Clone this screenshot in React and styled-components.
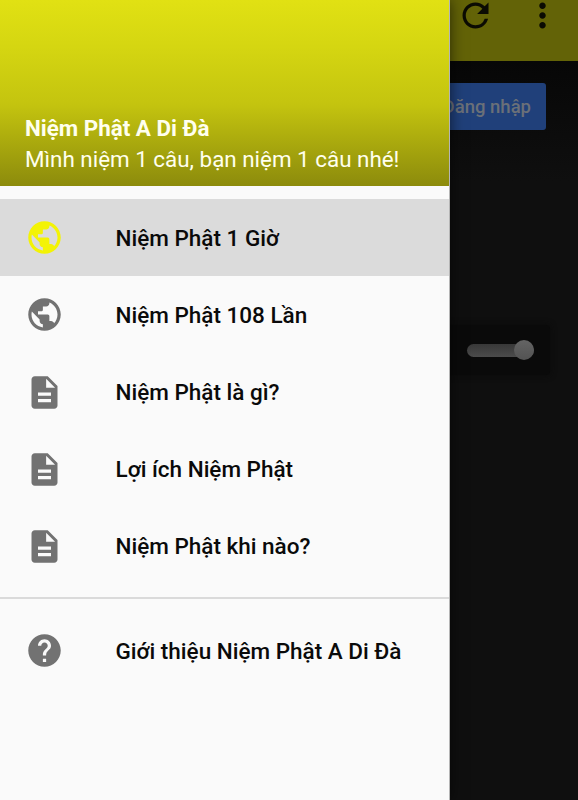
import React from "react"
import styled, { createGlobalStyle } from "styled-components"
import { MdPublic, MdDescription, MdHelp, MdRefresh, MdMoreVert } from "react-icons/md"

const GlobalStyle = createGlobalStyle`
    * {
        box-sizing: border-box;
    }
    body {
        margin: 0;
        font-family: Roboto, "Noto Sans", sans-serif;
    }
`;

const Screen = styled.div`
    position: relative;
    height: 800px;
    overflow: hidden;
    background: #0f0f0f;
`;

/* the page behind the open drawer, already dimmed */
const AppBar = styled.header`
    display: flex;
    justify-content: flex-end;
    gap: 28.5px;
    height: 61px;
    padding: 0 16px 0 0;
    background: #636307;
    color: #0b0b03;
    font-size: 39px;

    svg {
        margin-top: -4px;
    }
`;

const Page = styled.main`
    display: flex;
    flex-direction: column;
    align-items: flex-end;
    height: 739px;
    padding: 22px 28px 0 0;
    background: linear-gradient(#070707, #0f0f0f 120px);
`;

const LoginButton = styled.button`
    width: 180px;
    height: 47px;
    margin-right: 4px;
    padding: 0 15px 0 0;
    border: 0;
    border-radius: 3px;
    background: #20407a;
    color: #6b7078;
    font-family: Roboto, sans-serif;
    font-size: 18.5px;
    font-weight: 500;
    text-align: right;
`;

const Player = styled.div`
    display: flex;
    align-items: center;
    justify-content: flex-end;
    width: 300px;
    height: 50px;
    margin-top: 195px;
    padding-right: 16px;
    border-radius: 4px;
    background: #0a0a0a;
    box-shadow: 0 0 6px #0a0a0a;
`;

const Track = styled.div`
    display: flex;
    align-items: center;
    justify-content: flex-end;
    width: 67px;
    height: 13px;
    border-radius: 7px;
    background: linear-gradient(#383838, #4b4b4b);
`;

const Thumb = styled.div`
    width: 20px;
    height: 20px;
    border-radius: 50%;
    background: linear-gradient(#646464, #535353);
`;

const Drawer = styled.aside`
    position: absolute;
    top: 0;
    left: 0;
    width: 450px;
    height: 800px;
    background: #fafafa;
    border-right: 1px solid #b5b5b5;
    box-shadow: 0 0 14px rgba(0, 0, 0, 0.6);
`;

const Header = styled.div`
    display: flex;
    flex-direction: column;
    justify-content: flex-end;
    height: 186px;
    padding: 0 25px 12px;
    background: linear-gradient(#e1e113 0%, #d5d611 25%, #c4c40f 56%, #8c8b0c 100%);
    color: #ffffee;
    font-size: 22.4px;
    line-height: 30px;
    white-space: nowrap;
`;

const Title = styled.div`
    margin-bottom: 1px;
    font-weight: 700;
`;

const Menu = styled.nav`
    padding-top: 12.6px;
`;

const Item = styled.a`
    display: flex;
    align-items: center;
    height: 77.2px;
    padding: 1px 0 0 25px;
    background: ${props => props.$active ? "#dbdbdb" : "transparent"};
    color: #0a0a0a;
    font-size: 22.5px;
    font-weight: 500;
    white-space: nowrap;

    svg {
        width: 39px;
        height: 39px;
        margin-right: 51.5px;
        color: ${props => props.$active ? "#f3f305" : "#727272"};
    }
`;

const Divider = styled.hr`
    height: 1.6px;
    margin: 12.4px 0 13px;
    border: 0;
    background: #dadada;
`;

const items = [
    { label: "Niệm Phật 1 Giờ", icon: MdPublic, active: true },
    { label: "Niệm Phật 108 Lần", icon: MdPublic },
    { label: "Niệm Phật là gì?", icon: MdDescription },
    { label: "Lợi ích Niệm Phật", icon: MdDescription },
    { label: "Niệm Phật khi nào?", icon: MdDescription },
]

const App = () => (
    <Screen>
        <GlobalStyle />
        <AppBar>
            <MdRefresh />
            <MdMoreVert />
        </AppBar>
        <Page>
            <LoginButton>Đăng nhập</LoginButton>
            <Player>
                <Track><Thumb /></Track>
            </Player>
        </Page>
        <Drawer>
            <Header>
                <Title>Niệm Phật A Di Đà</Title>
                <div>Mình niệm 1 câu, bạn niệm 1 câu nhé!</div>
            </Header>
            <Menu>
                {items.map(({ label, icon: Icon, active }) => (
                    <Item key={label} $active={active}><Icon />{label}</Item>
                ))}
                <Divider />
                <Item><MdHelp />Giới thiệu Niệm Phật A Di Đà</Item>
            </Menu>
        </Drawer>
    </Screen>
)

export default App
